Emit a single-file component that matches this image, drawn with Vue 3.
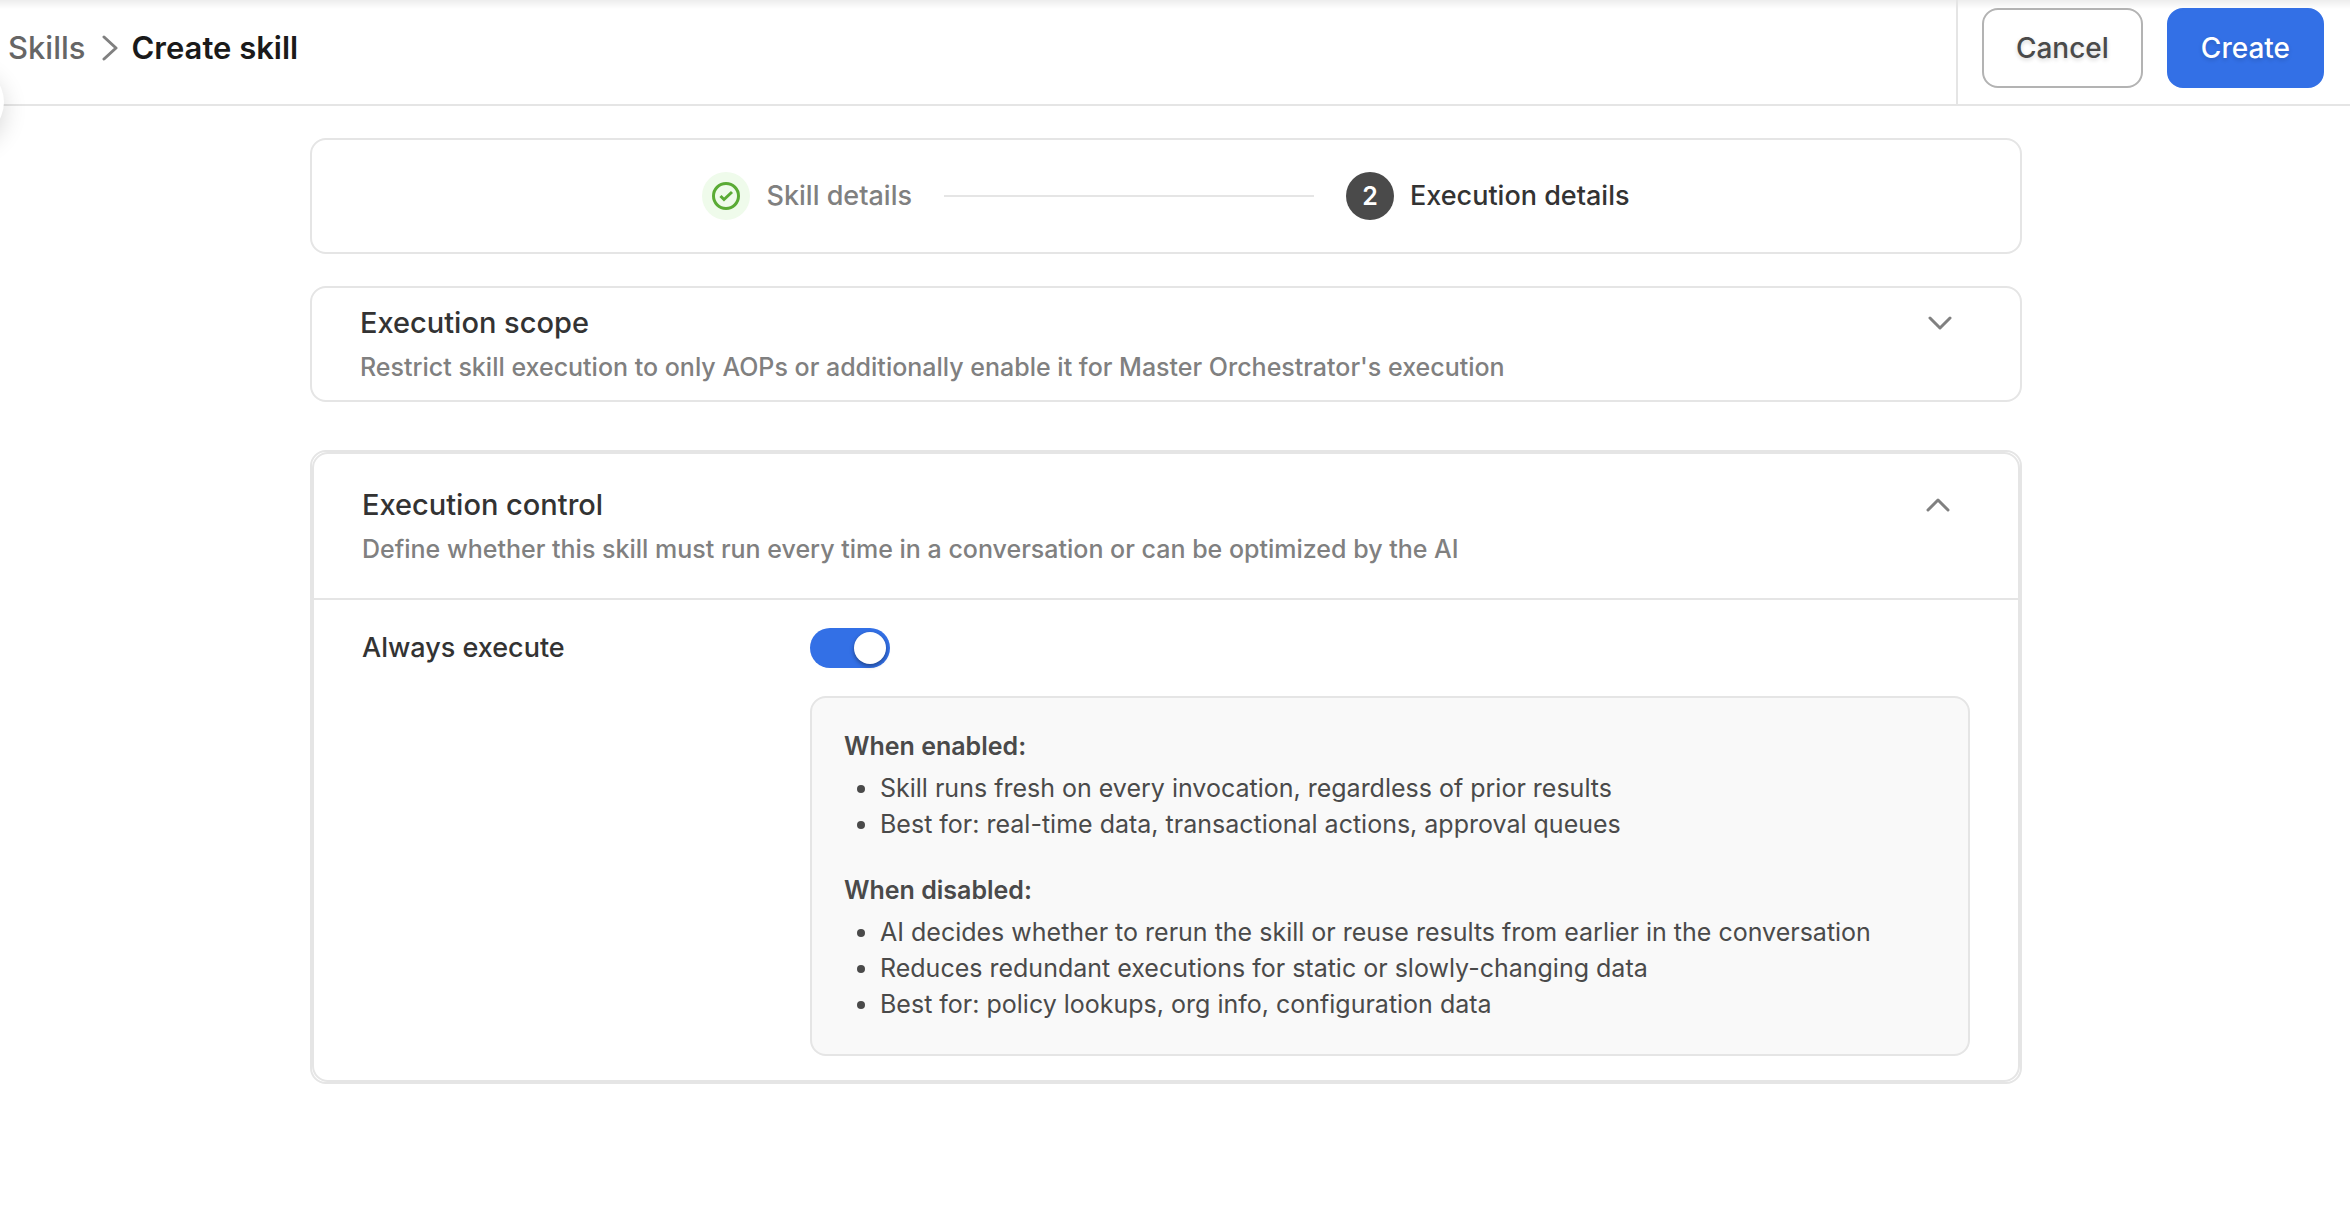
<script setup>
import { ref } from 'vue'

const scopeOpen = ref(false)
const controlOpen = ref(true)
const alwaysExecute = ref(true)

const modes = [
  {
    title: 'When enabled:',
    points: [
      'Skill runs fresh on every invocation, regardless of prior results',
      'Best for: real-time data, transactional actions, approval queues',
    ],
  },
  {
    title: 'When disabled:',
    points: [
      'AI decides whether to rerun the skill or reuse results from earlier in the conversation',
      'Reduces redundant executions for static or slowly-changing data',
      'Best for: policy lookups, org info, configuration data',
    ],
  },
]
</script>

<template>
  <div class="page">
    <header class="topbar">
      <nav class="crumbs" aria-label="Breadcrumb">
        <a class="crumb-link" href="#">Skills</a>
        <svg class="crumb-sep" viewBox="0 0 16 26" aria-hidden="true">
          <path d="M2 2l12 11L2 24" />
        </svg>
        <h1 class="crumb-current">Create skill</h1>
      </nav>
      <div class="actions">
        <button type="button" class="btn btn-outline">Cancel</button>
        <button type="button" class="btn btn-primary">Create</button>
      </div>
    </header>
    <button type="button" class="sidebar-handle" aria-label="Expand sidebar"></button>

    <main class="content">
      <ol class="stepper card">
        <li class="step step-done">
          <span class="badge">
            <svg class="check" viewBox="0 0 28 28" aria-hidden="true">
              <circle cx="14" cy="14" r="12.5" />
              <path d="M8.5 14l3.5 3.5 8-7.5" />
            </svg>
          </span>
          <span>Skill details</span>
        </li>
        <li class="step-line" aria-hidden="true"></li>
        <li class="step step-current" aria-current="step">
          <span class="badge">2</span>
          <span>Execution details</span>
        </li>
      </ol>

      <section class="card">
        <div class="section-head section-head-compact">
          <div>
            <h2 class="section-title">Execution scope</h2>
            <p class="section-sub">Restrict skill execution to only AOPs or additionally enable it for Master Orchestrator's execution</p>
          </div>
          <button type="button" class="toggle-section" aria-label="Execution scope" :aria-expanded="scopeOpen" @click="scopeOpen = !scopeOpen">
            <svg viewBox="0 0 24 16" aria-hidden="true"><path d="M2 3l10 10L22 3" /></svg>
          </button>
        </div>
      </section>

      <section class="card card-active">
        <div class="card-inner">
          <div class="section-head">
            <div>
              <h2 class="section-title">Execution control</h2>
              <p class="section-sub">Define whether this skill must run every time in a conversation or can be optimized by the AI</p>
            </div>
            <button type="button" class="toggle-section" aria-label="Execution control" :aria-expanded="controlOpen" @click="controlOpen = !controlOpen">
              <svg viewBox="0 0 24 16" aria-hidden="true"><path d="M2 13L12 3l10 10" /></svg>
            </button>
          </div>
          <div v-if="controlOpen" class="section-body">
            <label class="field-label" for="always-execute">Always execute</label>
            <div class="field">
              <input id="always-execute" v-model="alwaysExecute" type="checkbox" role="switch" class="switch" />
              <div class="info">
                <div v-for="mode in modes" :key="mode.title" class="mode">
                  <h3 class="mode-title">{{ mode.title }}</h3>
                  <ul class="mode-list">
                    <li v-for="point in mode.points" :key="point">{{ point }}</li>
                  </ul>
                </div>
              </div>
            </div>
          </div>
        </div>
      </section>
    </main>
  </div>
</template>

<style>
body {
  margin: 0;
  background: #fff;
}
</style>

<style scoped>
.page,
.page * {
  box-sizing: border-box;
}

.page {
  position: relative;
  overflow-x: hidden;
  min-height: 100vh;
  color: #333;
  font-family: Inter, "Open Sans", sans-serif;
  font-size: 25px;
  line-height: 36px;
}

h1, h2, h3, p, ul, ol {
  margin: 0;
  padding: 0;
}

h2, p {
  font-weight: 500;
}

button {
  font-family: inherit;
  cursor: pointer;
}

svg {
  display: block;
  fill: none;
  stroke-linecap: round;
  stroke-linejoin: round;
}

.topbar {
  display: flex;
  justify-content: space-between;
  border-bottom: 2px solid #e5e5e5;
  background: linear-gradient(#ededed, #fff 9px);
}

.crumbs {
  display: flex;
  align-items: center;
  height: 96px;
  padding-left: 8px;
  font-size: 31px;
  font-weight: 500;
}

.crumb-link {
  color: #666;
  text-decoration: none;
}

.crumb-sep {
  width: 16px;
  height: 26px;
  margin: 0 14px 0 16px;
  stroke: #808080;
  stroke-width: 3;
}

.crumb-current {
  color: #1a1a1a;
  font-size: inherit;
  font-weight: 600;
}

.actions {
  display: flex;
  gap: 24px;
  padding: 8px 26px 16px 24px;
  border-left: 2px solid #e5e5e5;
}

.btn {
  height: 80px;
  padding: 0 32px;
  border: 2px solid #b3b3b3;
  border-radius: 16px;
  font-size: 28px;
  font-weight: 500;
  text-shadow: 0 2px 4px rgba(0, 0, 0, 0.16);
}

.btn-outline {
  background: #fff;
  color: #4a4a4a;
}

.btn-primary {
  border-color: #3370e6;
  background: #3370e6;
  color: #fff;
}

.sidebar-handle {
  position: absolute;
  top: 66px;
  left: -68px;
  width: 72px;
  height: 72px;
  border: 0;
  border-radius: 50%;
  background: #fff;
  box-shadow: 0 8px 24px rgba(0, 0, 0, 0.16);
}

.content {
  display: flex;
  flex-direction: column;
  max-width: 1730px;
  margin: 0 auto;
  padding: 32px 18px 32px 0;
}

.card {
  border: 2px solid #e5e5e5;
  border-radius: 16px;
  margin-bottom: 32px;
}

.stepper {
  display: flex;
  align-items: center;
  justify-content: center;
  gap: 32px;
  padding: 32px;
  list-style: none;
  font-size: 27px;
}

.step {
  display: flex;
  align-items: center;
  gap: 16px;
  font-weight: 500;
}

.step-done {
  color: #808080;
}

.step-line {
  width: 370px;
  height: 2px;
  background: #e5e5e5;
}

.badge {
  display: flex;
  align-items: center;
  justify-content: center;
  width: 48px;
  height: 48px;
  border-radius: 50%;
  background: #4a4a4a;
  color: #fff;
  font-size: 25px;
  font-weight: 600;
}

.step-done .badge {
  background: #effbeb;
}

.check {
  width: 28px;
  height: 28px;
  stroke: #5aab35;
  stroke-width: 3;
  stroke-linecap: butt;
  stroke-linejoin: miter;
}

.section-head {
  display: flex;
  align-items: flex-start;
  justify-content: space-between;
  padding: 31px 68px 31px 48px;
}

.section-head-compact {
  padding-top: 15px;
  padding-bottom: 15px;
}

.section-title {
  margin-bottom: 6px;
  font-size: 29px;
  line-height: 40px;
}

.section-sub {
  color: #808080;
}

.toggle-section {
  padding: 12px 0;
  border: 0;
  background: none;
}

.toggle-section svg {
  width: 24px;
  height: 16px;
  stroke: #808080;
  stroke-width: 3;
}

.card-active {
  margin-top: 16px;
}

.card-inner {
  border: 2px solid #e5e5e5;
  border-radius: 16px;
}

.section-body {
  display: flex;
  padding: 28px 48px 24px;
  border-top: 2px solid #e5e5e5;
}

.field-label {
  flex: 0 0 448px;
  font-size: 27px;
  font-weight: 500;
  line-height: 40px;
}

.field {
  flex: 1;
}

.switch {
  display: block;
  appearance: none;
  width: 80px;
  height: 40px;
  margin: 0 0 28px;
  padding: 4px;
  border-radius: 20px;
  background: #b3b3b3;
  cursor: pointer;
}

.switch::before {
  content: "";
  display: block;
  width: 32px;
  height: 32px;
  border-radius: 50%;
  background: #fff;
  box-shadow: 0 2px 4px rgba(0, 0, 0, 0.4);
}

.switch:checked {
  background: #3370e6;
}

.switch:checked::before {
  margin-left: auto;
}

.info {
  display: flex;
  flex-direction: column;
  gap: 30px;
  padding: 30px 32px 32px;
  border: 2px solid #e5e5e5;
  border-radius: 16px;
  background: #f9f9f9;
  color: #4a4a4a;
}

.mode-title {
  margin-bottom: 6px;
  font-size: inherit;
  font-weight: 600;
}

.mode-list {
  padding-left: 36px;
}
</style>
